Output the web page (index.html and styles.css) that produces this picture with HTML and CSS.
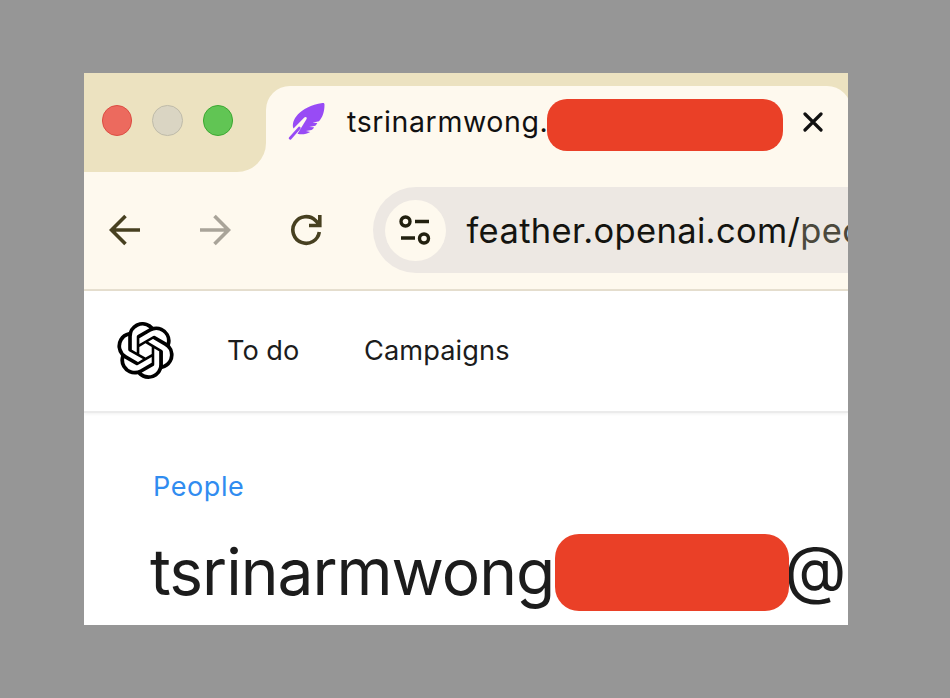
FILE: index.html
```html
<!DOCTYPE html>
<html lang="en">
<head>
<meta charset="utf-8">
<title>Feather</title>
<link rel="stylesheet" href="styles.css">
</head>
<body>
<main class="window">
  <header class="tab-strip">
    <div class="controls">
      <span class="light close"></span>
      <span class="light minimize"></span>
      <span class="light expand"></span>
    </div>
    <div class="tab">
      <svg class="feather" viewBox="0 0 38 38"><path d="M5.500 26.500C2.500 19 11 4.500 34.500 1c1.500-.2 2 .3 2 1.600C36.500 10 34.500 15.500 31 19.200l-6.500 1.500 4.800.3c-.5 1.300-1.200 2-2 2.700l-6 1.200 4.700.4c-.5 1.500-1.500 2.200-2.500 2.800l-5.500.8 4.200 1c-4 2.500-8.500 3-12.700 1.900L18.300 17.500c1.400-1.800-.4-3.400-2-2Z" fill="#984bf5"/><path d="m2.200 36.300 9-10.200" fill="none" stroke="#984bf5" stroke-width="2.800" stroke-linecap="round"/></svg>
      <span class="tab-title">tsrinarmwong.</span>
      <span class="redaction tab-redaction"></span>
      <svg class="tab-close" viewBox="0 0 20 20"><path d="m2 2 16 16M18 2 2 18"/></svg>
    </div>
  </header>
  <div class="toolbar">
    <svg class="tool back" viewBox="0 0 32 32"><path d="M31 16H3M16.500 2 2.500 16l14 14"/></svg>
    <svg class="tool forward" viewBox="0 0 32 32"><path d="M1 16h28M15.500 2l14 14-14 14"/></svg>
    <svg class="tool reload" viewBox="0 0 32 32"><path d="M29.300 18A13.300 13.300 0 1 1 25.500 6.500L29 10M29.800 1v10.500H19"/></svg>
    <div class="address">
      <span class="site-info"><svg viewBox="0 0 32 30"><circle cx="6.500" cy="6.500" r="4.500"/><circle cx="25" cy="23.500" r="4.500"/><path d="M16 6.500h14M2 23h14"/></svg></span>
      <span class="url">feather.openai.com/<span class="path">peo</span></span>
    </div>
  </div>
  <nav class="nav">
    <svg class="logo" viewBox="0 0 24 24"><path d="M22.2819 9.8211a5.9847 5.9847 0 0 0-.5157-4.9108 6.0462 6.0462 0 0 0-6.5098-2.9A6.0651 6.0651 0 0 0 4.9807 4.1818a5.9847 5.9847 0 0 0-3.9977 2.9 6.0462 6.0462 0 0 0 .7427 7.0966 5.98 5.98 0 0 0 .511 4.9107 6.051 6.051 0 0 0 6.5146 2.9001A5.9847 5.9847 0 0 0 13.2599 24a6.0557 6.0557 0 0 0 5.7718-4.2058 5.9894 5.9894 0 0 0 3.9977-2.9001 6.0557 6.0557 0 0 0-.7475-7.0729zm-9.022 12.6081a4.4755 4.4755 0 0 1-2.8764-1.0408l.1419-.0804 4.7783-2.7582a.7948.7948 0 0 0 .3927-.6813v-6.7369l2.02 1.1686a.071.071 0 0 1 .038.052v5.5826a4.504 4.504 0 0 1-4.4945 4.4944zm-9.6607-4.1254a4.4708 4.4708 0 0 1-.5346-3.0137l.142.0852 4.783 2.7582a.7712.7712 0 0 0 .7806 0l5.8428-3.3685v2.3324a.0804.0804 0 0 1-.0332.0615L9.74 19.9502a4.4992 4.4992 0 0 1-6.1408-1.6464zM2.3408 7.8956a4.485 4.485 0 0 1 2.3655-1.9728V11.6a.7664.7664 0 0 0 .3879.6765l5.8144 3.3543-2.0201 1.1685a.0757.0757 0 0 1-.071 0l-4.8303-2.7865A4.504 4.504 0 0 1 2.3408 7.872zm16.5963 3.8558L13.1038 8.364 15.1192 7.2a.0757.0757 0 0 1 .071 0l4.8303 2.7913a4.4944 4.4944 0 0 1-.6765 8.1042v-5.6772a.79.79 0 0 0-.407-.667zm2.0107-3.0231l-.142-.0852-4.7735-2.7818a.7759.7759 0 0 0-.7854 0L9.409 9.2297V6.8974a.0662.0662 0 0 1 .0284-.0615l4.8303-2.7866a4.4992 4.4992 0 0 1 6.6802 4.66zM8.3065 12.863l-2.02-1.1638a.0804.0804 0 0 1-.038-.0567V6.0742a4.4992 4.4992 0 0 1 7.3757-3.4537l-.142.0805L8.704 5.459a.7948.7948 0 0 0-.3927.6813zm1.0976-2.3654l2.602-1.4998 2.6069 1.4998v2.9994l-2.5974 1.4997-2.6067-1.4997Z"/></svg>
    <a class="todo">To do</a>
    <a class="campaigns">Campaigns</a>
  </nav>
  <section class="content">
    <a class="crumb">People</a>
    <h1 class="heading"><span class="name">tsrinarmwong</span><span class="redaction name-redaction"></span><span class="at">@</span></h1>
  </section>
</main>
</body>
</html>
```
FILE: styles.css
```css
* { box-sizing: border-box; }
body {
  margin: 0;
  height: 698px;
  padding: 73px 102px 73px 84px;
  background: #969696;
  font-family: Inter, "Liberation Sans", sans-serif;
  overflow: hidden;
}
svg { display: block; flex: none; }
.window {
  width: 764px;
  height: 552px;
  overflow: hidden;
  background: #fff;
}
.tab-strip {
  display: flex;
  height: 99px;
  background: linear-gradient(#ece2c0 40px, #fef9ee 40px);
}
.controls {
  display: flex;
  flex: none;
  gap: 20px;
  width: 182px;
  padding: 32px 0 0 17.500px;
  background: #ece2c0;
  border-radius: 0 0 29px 0;
}
.light {
  width: 30.500px;
  height: 30.500px;
  border: 1px solid;
  border-radius: 50%;
}
.close { background: #ec6a5e; border-color: #dc4d43; }
.minimize { background: #dad5c3; border-color: #bfbba9; }
.expand { background: #61c554; border-color: #3ca832; }
.tab {
  display: flex;
  flex: none;
  width: 585px;
  margin-top: 13px;
  padding-left: 22px;
  background: #fef9ee;
  border-radius: 24px 24px 0 0;
}
.feather { width: 38px; height: 38px; margin-top: 16px; }
.tab-title {
  width: 199px;
  margin: 16px 0 0 21px;
  font-size: 28.500px;
  line-height: 40px;
  letter-spacing: 0.600px;
  color: #111;
  white-space: nowrap;
}
.redaction { flex: none; background: #ea4027; }
.tab-redaction {
  z-index: 1;
  width: 236px;
  height: 52px;
  margin: 13px 0 0 1px;
  border-radius: 20px;
}
.tab-close {
  width: 20px;
  height: 20px;
  margin: 26px 0 0 19.500px;
  fill: none;
  stroke: #111;
  stroke-width: 3.200;
  stroke-linecap: round;
}
.toolbar {
  display: flex;
  align-items: center;
  height: 119px;
  padding: 0 0 1px 25px;
  border-bottom: 2px solid #e6dfcf;
  background: #fef9ee;
}
.tool { width: 32px; height: 32px; fill: none; stroke-width: 3.600; }
.back { stroke: #474020; }
.forward { margin-left: 58px; stroke: #a9a499; }
.reload { margin-left: 59px; stroke: #474020; }
.address {
  display: flex;
  flex: none;
  align-items: center;
  width: 700px;
  height: 86px;
  margin-left: 50.500px;
  padding-left: 12px;
  background: #ede8e3;
  border-radius: 43px;
}
.site-info {
  display: flex;
  align-items: center;
  justify-content: center;
  width: 61px;
  height: 61px;
  background: #fef9ee;
  border-radius: 50%;
}
.site-info svg {
  width: 32px;
  height: 30px;
  fill: none;
  stroke: #22200f;
  stroke-width: 3.400;
}
.url {
  margin-left: 21px;
  font-size: 34.500px;
  letter-spacing: 0.350px;
  color: #141410;
  white-space: nowrap;
}
.path { color: #4b493d; }
.nav {
  display: flex;
  align-items: center;
  height: 122px;
  padding: 0 0 2px 33px;
  border-bottom: 2px solid #ebebeb;
  box-shadow: 0 1px 3px rgba(0, 0, 0, 0.060);
  font-size: 27.200px;
  color: #1c1c1c;
}
.logo { width: 57px; height: 57px; }
.todo { width: 137px; margin-left: 53px; }
.campaigns { letter-spacing: 0.100px; }
.content { padding: 57px 0 0 66px; }
.crumb {
  display: block;
  margin-left: 3px;
  font-size: 27px;
  line-height: 34px;
  letter-spacing: 0.600px;
  color: #308cf0;
}
.heading {
  display: flex;
  margin: 30px 0 0;
  color: #1c1c1c;
  font-size: 64px;
  line-height: 76px;
  font-weight: 400;
}
.name { width: 405px; letter-spacing: -1px; }
.name-redaction {
  z-index: 1;
  width: 233.500px;
  height: 77px;
  border-radius: 24px;
}
.at {
  margin-left: -4px;
  font-size: 64px;
  line-height: 69px;
}
```
